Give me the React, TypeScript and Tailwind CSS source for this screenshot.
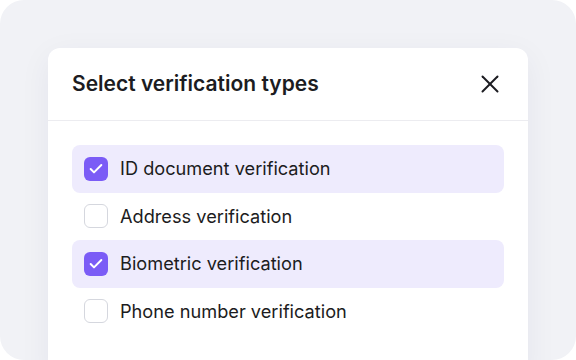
import { X, Check } from 'lucide-react'

export default function App() {
  const items = [
    { label: 'ID document verification', checked: true },
    { label: 'Address verification', checked: false },
    { label: 'Biometric verification', checked: true },
    { label: 'Phone number verification', checked: false },
  ]

  return (
    <div className="w-[576px] h-[360px] bg-white" style={{ fontFamily: 'Inter, sans-serif' }}>
      <div className="w-full h-full rounded-3xl bg-[#f1f2f6] pt-12 px-12 overflow-hidden">
        <div className="bg-white rounded-xl h-[330px] shadow-[0_8px_32px_rgba(30,40,80,0.06)]">
          {/* Header */}
          <div className="flex items-center justify-between h-[73px] pl-6 pr-[23px] border-b border-[#ececf0]">
            <h2 className="text-[21px] font-semibold text-[#1c1c21]">
              Select verification types
            </h2>
            <button className="w-[30px] h-[30px] flex items-center justify-center text-[#1c1c21]">
              <X className="w-[30px] h-[30px]" strokeWidth={1.6} />
            </button>
          </div>

          {/* Options */}
          <div className="px-6 pt-6 flex flex-col">
            {items.map((item, index) => (
              <div
                key={index}
                className={
                  'flex items-center gap-3 h-[47.5px] px-3 rounded-lg ' +
                  (item.checked ? 'bg-[#eeebfd]' : '')
                }
              >
                {item.checked ? (
                  <div className="w-6 h-6 rounded-md bg-[#7b5cf6] flex items-center justify-center">
                    <Check className="w-4 h-4 text-white" strokeWidth={3} />
                  </div>
                ) : (
                  <div className="w-6 h-6 rounded-md bg-white border-[1.5px] border-[#d5d7de]" />
                )}
                <span className="text-[18.2px] text-[#1c1c21]">{item.label}</span>
              </div>
            ))}
          </div>
        </div>
      </div>
    </div>
  )
}
